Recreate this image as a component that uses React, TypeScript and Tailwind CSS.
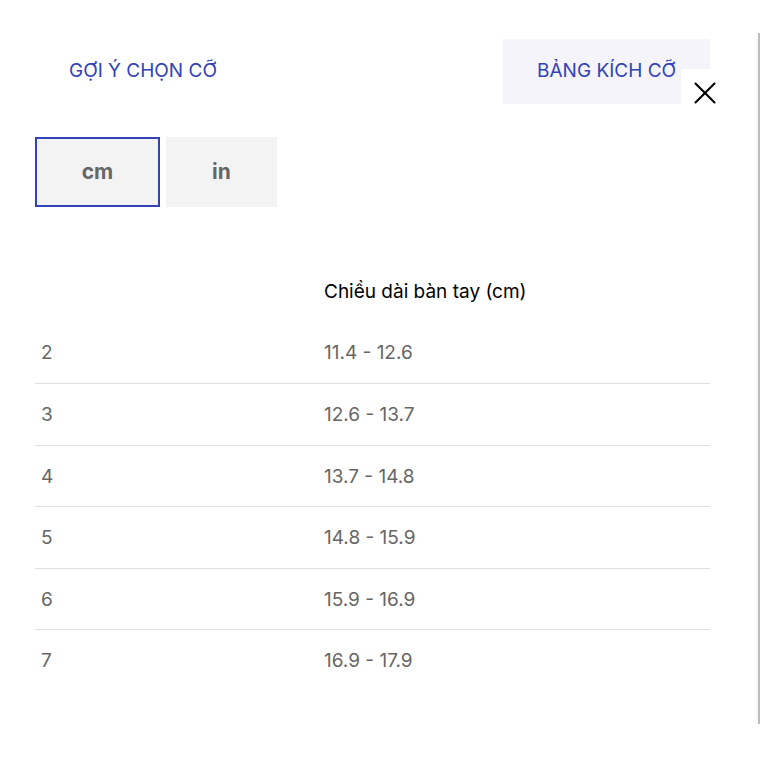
import { X } from "lucide-react";
import { useState } from "react";

const ROWS = [
  { size: "2", cm: "11.4 - 12.6" },
  { size: "3", cm: "12.6 - 13.7" },
  { size: "4", cm: "13.7 - 14.8" },
  { size: "5", cm: "14.8 - 15.9" },
  { size: "6", cm: "15.9 - 16.9" },
  { size: "7", cm: "16.9 - 17.9" },
];

export default function App() {
  const [unit, setUnit] = useState<"cm" | "in">("cm");

  return (
    <div className="relative h-[760px] w-[760px] overflow-hidden bg-white font-['Inter','Noto_Sans',sans-serif]">
      <div className="absolute top-[33px] right-0 bottom-[36px] w-[5px] bg-[#fafafa]">
        <div className="ml-auto h-full w-[2px] bg-[#bdbdbd]" />
      </div>

      <div className="w-[710px] pl-[35px]">
        <nav className="mt-[39px] flex justify-between">
          <button className="h-[65px] px-[34px] text-[19px] text-[#3342b6]">GỢI Ý CHỌN CỠ</button>
          <button className="h-[65px] bg-[#f5f4fb] px-[34px] text-[19px] text-[#3342b6]">BẢNG KÍCH CỠ</button>
        </nav>

        <div className="mt-[33px] flex gap-[6px]">
          <button
            onClick={() => setUnit("cm")}
            className={
              unit === "cm"
                ? "h-[70px] w-[125px] border-2 border-[#3342b6] bg-[#f3f3f3] text-[21px] font-bold text-[#666]"
                : "h-[70px] w-[125px] bg-[#f3f3f3] text-[21px] font-bold text-[#666]"
            }
          >
            cm
          </button>
          <button
            onClick={() => setUnit("in")}
            className={
              unit === "in"
                ? "h-[70px] w-[111px] border-2 border-[#3342b6] bg-[#f3f3f3] text-[21px] font-bold text-[#666]"
                : "h-[70px] w-[111px] bg-[#f3f3f3] text-[21px] font-bold text-[#666]"
            }
          >
            in
          </button>
        </div>

        <table className="mt-[54px] w-full border-collapse text-[19px]">
          <thead>
            <tr className="h-[61px]">
              <th className="w-[283px]" />
              <th className="px-[6px] pt-[2px] text-left font-normal text-black">Chiều dài bàn tay (cm)</th>
            </tr>
          </thead>
          <tbody>
            {ROWS.map((row, i) => (
              <tr
                key={row.size}
                className={
                  i < ROWS.length - 1
                    ? "h-[61.5px] border-b border-[#e0e0e0] text-[#666]"
                    : "h-[61.5px] text-[#666]"
                }
              >
                <td className="px-[6px] pt-[2px]">{row.size}</td>
                <td className="px-[6px] pt-[2px]">{row.cm}</td>
              </tr>
            ))}
          </tbody>
        </table>
      </div>

      <button
        aria-label="Đóng"
        className="absolute top-[69px] left-[681px] flex h-[48px] w-[48px] items-center justify-center bg-white"
      >
        <X className="size-[38px] text-black" strokeWidth={1.3} />
      </button>
    </div>
  );
}
